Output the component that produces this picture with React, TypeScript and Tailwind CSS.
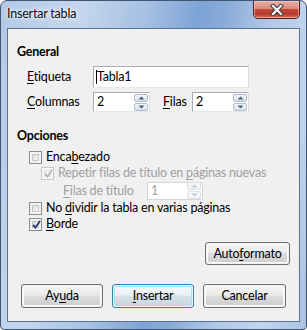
import React from "react";

const U = ({ children }: { children: React.ReactNode }) => (
  <span className="underline decoration-1 underline-offset-[2px]">{children}</span>
);

function Check({ checked, disabled }: { checked?: boolean; disabled?: boolean }) {
  return (
    <span
      className={`w-[13px] h-[13px] border flex p-[2px] shrink-0 ${
        disabled ? "border-[#c8c8c8] bg-[#f7f7f7]" : "border-[#8e8f8f] bg-[#f4f4f4]"
      }`}
    >
      <span
        className={`flex-1 relative ${
          disabled
            ? "bg-gradient-to-br from-[#eeeeee] to-[#fbfbfb] border border-[#e4e4e4]"
            : "bg-gradient-to-br from-[#d9dbde] to-[#f8f8f8] border border-[#c4c7cb]"
        }`}
      >
        {checked && (
          <svg
            className="absolute left-[-3px] top-[-4px]"
            width="13"
            height="13"
            viewBox="0 0 13 13"
          >
            <path
              d="M3 7 L5.5 9.5 L10 3"
              fill="none"
              stroke={disabled ? "#b6b6b6" : "#2e3a6e"}
              strokeWidth="1.8"
            />
          </svg>
        )}
      </span>
    </span>
  );
}

function Spin({ value, disabled, w }: { value: string; disabled?: boolean; w: string }) {
  return (
    <div
      className={`${w} h-full border flex items-center justify-between pl-[3px] pr-[1px] bg-white ${
        disabled ? "border-[#d5d5d5] text-[#a0a0a0]" : "border-[#abadb3] border-b-[#e3e9ef] border-r-[#dbdfe6] text-black"
      }`}
    >
      <span className="leading-[16px]">{value}</span>
      <div className="flex flex-col gap-[1px]">
        {[0, 1].map((i) => (
          <div
            key={i}
            className={`w-[14px] h-[8px] border rounded-[2px] flex items-center justify-center ${
              disabled
                ? "border-[#dcdfe3] bg-[#f4f5f6]"
                : "border-[#b3bccb] bg-gradient-to-b from-[#f3f6f9] to-[#d9e1ea]"
            }`}
          >
            <svg width="7" height="4" viewBox="0 0 7 4">
              <path
                d={i === 0 ? "M0.5 3.5 L3.5 0.5 L6.5 3.5 Z" : "M0.5 0.5 L3.5 3.5 L6.5 0.5 Z"}
                fill={disabled ? "#c3c9d2" : "#4a5f86"}
              />
            </svg>
          </div>
        ))}
      </div>
    </div>
  );
}

function Btn({
  children,
  w,
  def,
}: {
  children: React.ReactNode;
  w: string;
  def?: boolean;
}) {
  return (
    <div
      className={`${w} h-full rounded-[3px] border p-[1px] ${
        def ? "border-[#3c7fb1]" : "border-[#707070]"
      }`}
    >
      <div
        className={`w-full h-full rounded-[2px] flex items-center justify-center ${
          def
            ? "border border-[#9fe4f6] bg-[linear-gradient(#f3f7fa_0%,#eaf0f4_45%,#d7e2ea_50%,#cad7e0_100%)]"
            : "border border-[#fcfcfc] bg-[linear-gradient(#f2f2f2_0%,#ebebeb_45%,#dddddd_50%,#cfcfcf_100%)]"
        }`}
      >
        <span className="leading-[16px] text-black">{children}</span>
      </div>
    </div>
  );
}

export default function App() {
  return (
    <div
      className="w-[307px] h-[330px] border border-[#3f5572] rounded-t-[7px] rounded-b-[4px] flex flex-col overflow-hidden bg-[linear-gradient(100deg,#b2c9e6_0%,#c4d7ed_22%,#a7c1e3_40%,#7ea4d5_55%,#87aad8_62%,#b2c9e7_75%,#c2d5ec_88%,#a9c2e3_100%)] text-[12.5px] tracking-[-0.2px] text-black"
      style={{ fontFamily: 'Lato, "Noto Sans", sans-serif' }}
    >
      <div className="h-[27px] flex items-start shrink-0">
        <div className="pl-[6px] pt-[5px] leading-[16px] text-[#0b0b0b] [text-shadow:0_0_6px_#ffffff,0_0_3px_#ffffff]">
          Insertar tabla
        </div>
        <div className="ml-auto mr-[6px] mt-[-1px] w-[47px] h-[19px] rounded-b-[5px] border border-[#5a1e16] bg-[linear-gradient(#e8ada3_0%,#d98b7e_45%,#c34a3a_50%,#b8382a_75%,#d7705f_100%)] flex items-center justify-center shadow-[inset_0_0_0_1px_rgba(255,220,210,0.5)]">
          <svg width="14" height="12" viewBox="0 0 14 12">
            <path d="M3 2 L11 10 M11 2 L3 10" stroke="#3a3a3a" strokeWidth="4.2" strokeLinecap="square" />
            <path d="M3 2 L11 10 M11 2 L3 10" stroke="#ffffff" strokeWidth="2.2" strokeLinecap="square" />
          </svg>
        </div>
      </div>

      <div className="mx-[6px] h-[294px] shrink-0 border border-[#5d7190] bg-[#f0f0f0] flex flex-col">
        <div className="mt-[15px] h-[16px] leading-[16px] pl-[9px] font-bold">General</div>

        <div className="mt-[6px] h-[22px] flex items-center">
          <div className="w-[85px] pl-[19px] leading-[16px]">
            <U>E</U>tiqueta
          </div>
          <div className="w-[156px] h-full border border-[#abadb3] border-b-[#e3e9ef] border-r-[#dbdfe6] bg-white flex items-center pl-[2px]">
            <span className="w-[1px] h-[14px] bg-black mr-[0px]" />
            <span className="leading-[16px]">Tabla1</span>
          </div>
        </div>

        <div className="mt-[4px] h-[20px] flex items-center">
          <div className="w-[85px] pl-[19px] leading-[16px]">
            <U>C</U>olumnas
          </div>
          <Spin value="2" w="w-[57px]" />
          <div className="w-[42px] pl-[13px] leading-[16px]">
            <U>F</U>ilas
          </div>
          <Spin value="2" w="w-[57px]" />
        </div>

        <div className="mt-[16px] h-[16px] leading-[16px] pl-[9px] font-bold">Opciones</div>

        <div className="mt-[5px] h-[16px] flex items-center pl-[21px] gap-[4px]">
          <Check />
          <span className="leading-[16px]">
            Enca<U>b</U>ezado
          </span>
        </div>
        <div className="h-[16px] flex items-center pl-[33px] gap-[4px] text-[#a0a0a0]">
          <Check checked disabled />
          <span className="leading-[16px]">
            Repetir filas de título en <U>p</U>áginas nuevas
          </span>
        </div>
        <div className="h-[19px] flex items-center pl-[55px] text-[#a0a0a0]">
          <div className="w-[84px] leading-[16px]">
            <U>F</U>ilas de título
          </div>
          <div className="h-[18px]">
            <Spin value="1" w="w-[56px]" disabled />
          </div>
        </div>
        <div className="h-[16px] flex items-center pl-[21px] gap-[4px]">
          <Check />
          <span className="leading-[16px]">
            No <U>d</U>ividir la tabla en varias páginas
          </span>
        </div>
        <div className="h-[16px] flex items-center pl-[21px] gap-[4px]">
          <Check checked />
          <span className="leading-[16px]">
            <U>B</U>orde
          </span>
        </div>

        <div className="mt-[10px] h-[23px] flex justify-end pr-[9px]">
          <Btn w="w-[85px]">
            Auto<U>f</U>ormato
          </Btn>
        </div>

        <div className="mt-[19px] h-[24px] flex pl-[13px] gap-[9px]">
          <Btn w="w-[82px]">
            Ay<U>u</U>da
          </Btn>
          <Btn w="w-[82px]" def>
            <U>I</U>nsertar
          </Btn>
          <Btn w="w-[83px]">Cancelar</Btn>
        </div>
      </div>
    </div>
  );
}
